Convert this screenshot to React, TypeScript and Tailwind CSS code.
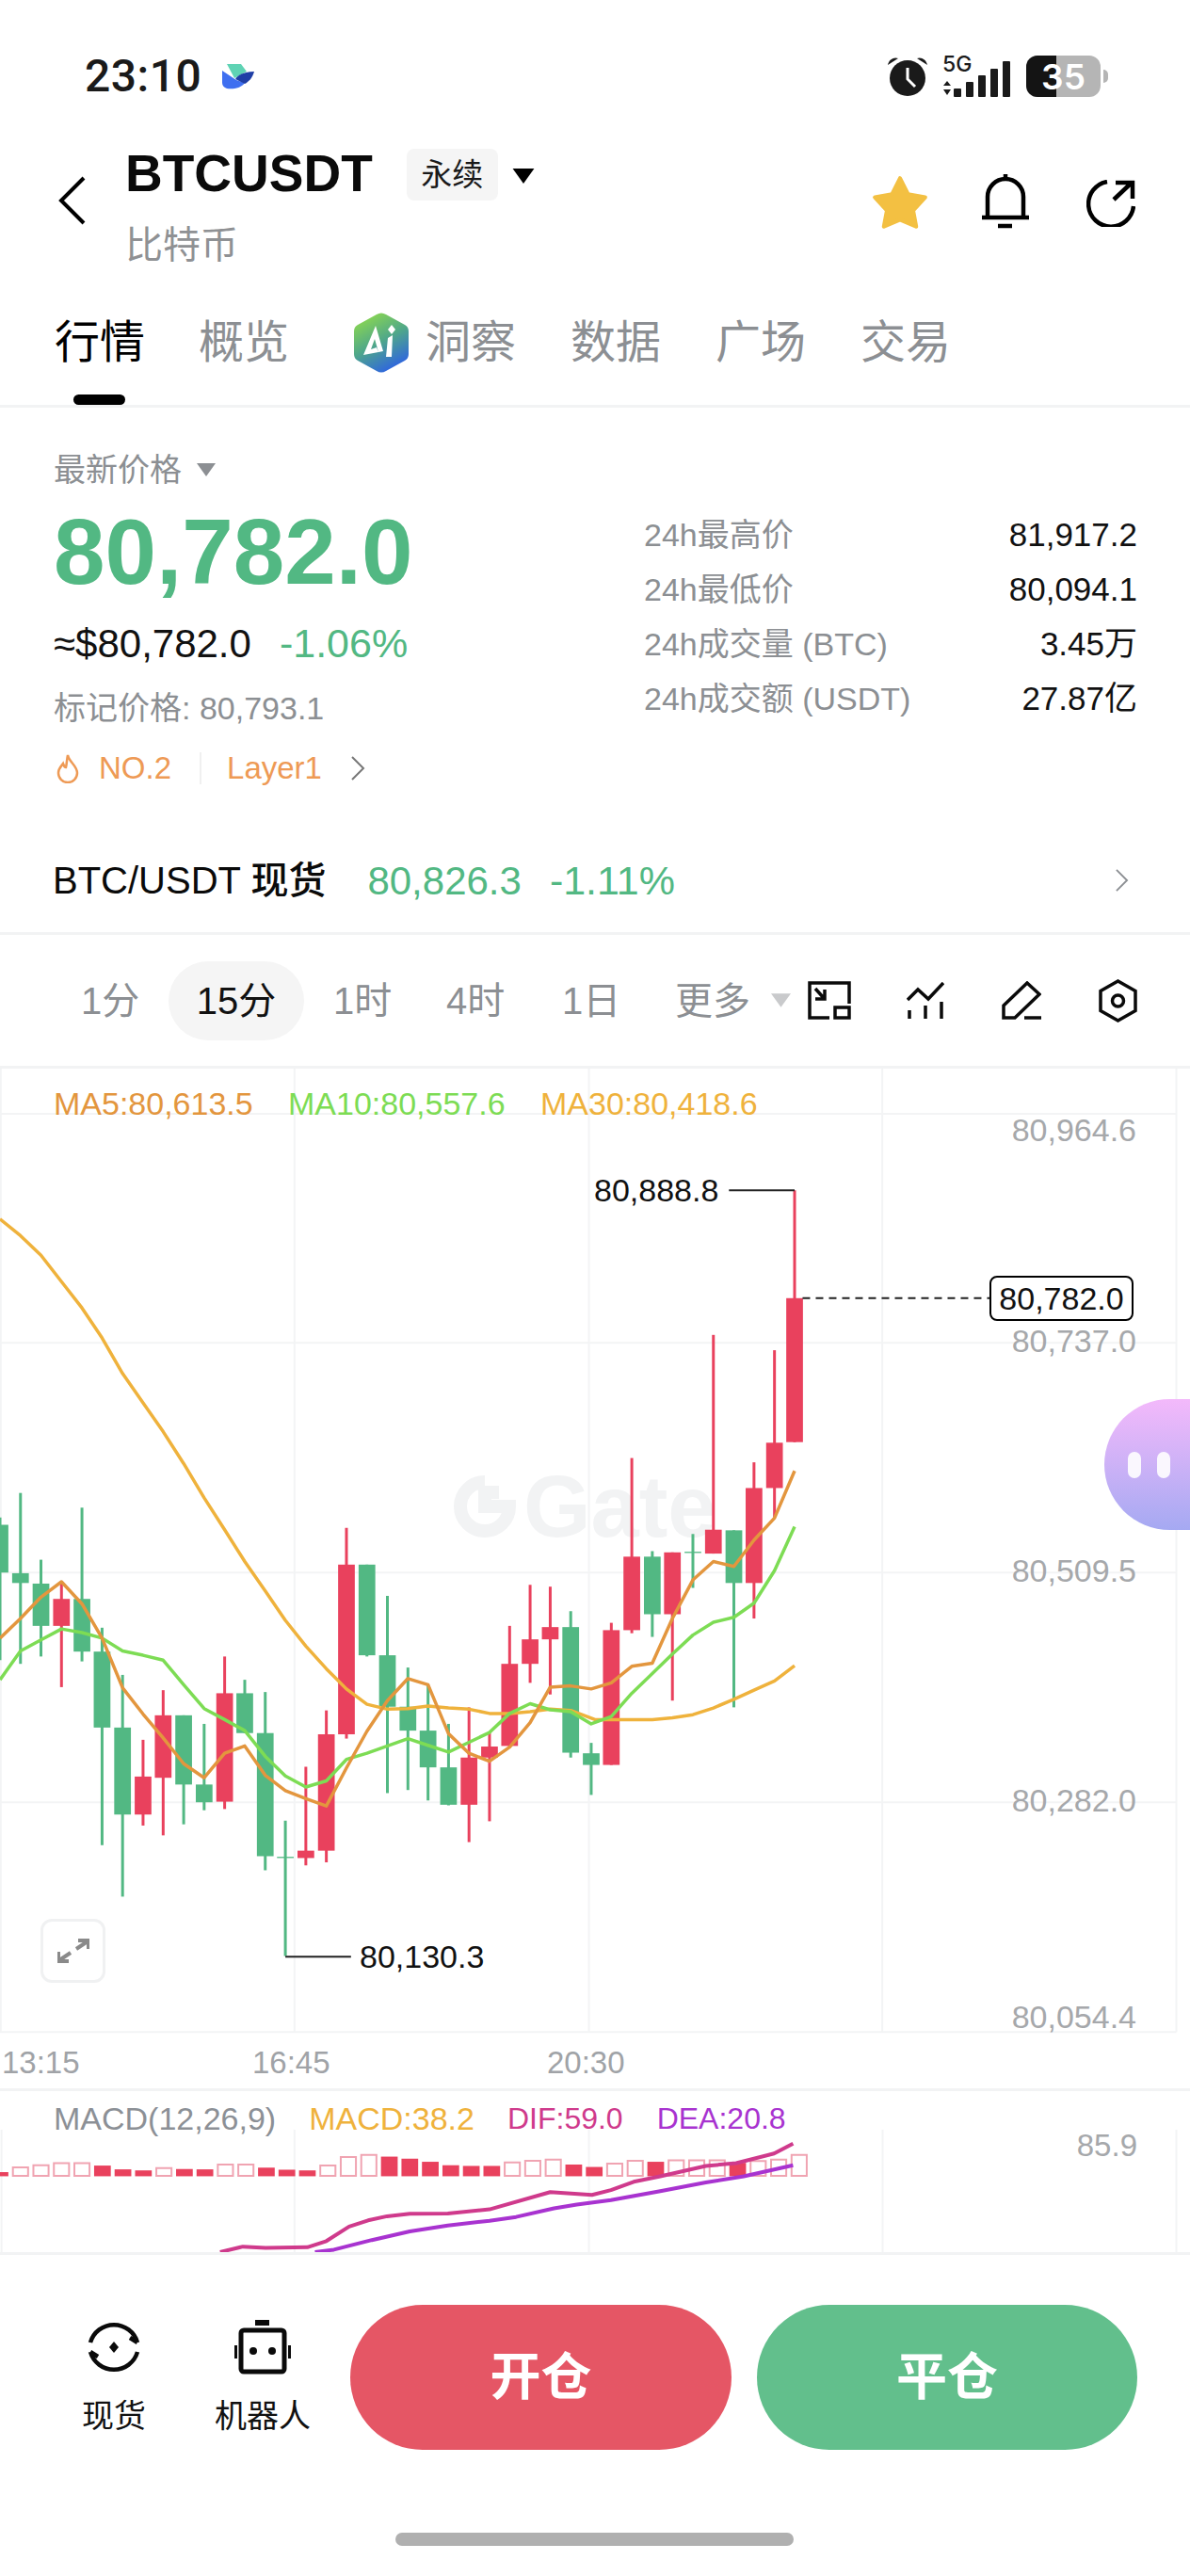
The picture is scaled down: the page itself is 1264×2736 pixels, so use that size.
import { ReactNode } from 'react';

const GREEN = '#52b883';
const RED = '#e9415d';

// x, wick top, body top, body bottom, wick bottom, up?
const candles: [number, number, number, number, number, boolean][] = [
  [0, 725, 737, 815, 958, false],
  [54, 685, 816, 832, 964, false],
  [108, 794, 833, 902, 952, false],
  [162, 830, 858, 902, 1002, true],
  [216, 709, 858, 944, 960, false],
  [269, 905, 944, 1068, 1260, false],
  [323, 982, 1068, 1210, 1344, false],
  [377, 1088, 1148, 1210, 1228, true],
  [430, 1007, 1048, 1150, 1244, true],
  [484, 1048, 1048, 1161, 1226, false],
  [538, 1062, 1161, 1190, 1203, false],
  [592, 952, 1012, 1189, 1201, true],
  [645, 990, 1012, 1077, 1077, false],
  [699, 1010, 1077, 1278, 1301, false],
  [752, 1220, 1279, 1281, 1441, false],
  [806, 1132, 1269, 1281, 1293, true],
  [860, 1040, 1079, 1269, 1288, true],
  [913, 742, 802, 1079, 1086, true],
  [967, 802, 802, 950, 952, false],
  [1021, 853, 950, 1034, 1175, false],
  [1075, 970, 1034, 1073, 1170, false],
  [1128, 998, 1073, 1133, 1187, false],
  [1182, 1062, 1133, 1194, 1195, false],
  [1236, 1035, 1117, 1194, 1255, true],
  [1290, 1076, 1099, 1117, 1221, true],
  [1343, 902, 964, 1098, 1099, true],
  [1397, 835, 924, 964, 995, true],
  [1450, 838, 904, 924, 1014, true],
  [1504, 878, 904, 1109, 1117, false],
  [1558, 1093, 1110, 1129, 1178, false],
  [1611, 897, 909, 1129, 1129, true],
  [1665, 628, 789, 909, 914, true],
  [1719, 780, 789, 883, 920, false],
  [1772, 782, 782, 883, 1024, true],
  [1826, 752, 781, 783, 840, false],
  [1880, 427, 745, 784, 784, true],
  [1934, 746, 746, 832, 1035, false],
  [1987, 635, 677, 832, 890, true],
  [2041, 452, 603, 677, 725, true],
  [2094, 191, 367, 602, 602, true],
];

const ma5 =
  '0,922 54,890 108,855 162,830 216,866 269,922 323,1003 377,1046 430,1085 484,1127 538,1150 592,1110 645,1098 699,1146 752,1171 806,1184 860,1196 913,1134 967,1074 1021,1024 1075,988 1128,998 1182,1078 1236,1110 1290,1123 1343,1100 1397,1060 1450,1002 1504,1000 1558,1005 1611,995 1665,968 1719,963 1772,890 1826,827 1880,797 1934,805 1987,762 2041,726 2094,649';
const ma10 =
  '0,990 54,943 108,925 162,907 216,913 269,922 323,943 377,950 430,958 484,998 538,1037 592,1055 645,1073 699,1115 752,1147 806,1165 860,1155 913,1120 967,1110 1021,1098 1075,1086 1128,1097 1182,1108 1236,1092 1290,1076 1343,1045 1397,1029 1450,1039 1504,1042 1558,1062 1611,1050 1665,1012 1719,980 1772,948 1826,917 1880,896 1934,888 1987,865 2041,812 2094,740';
const ma30 =
  '0,238 54,265 108,297 162,340 216,383 269,432 323,490 377,538 430,585 484,637 538,693 592,745 645,797 699,845 752,893 806,935 860,972 913,1005 967,1030 1021,1038 1075,1037 1128,1033 1182,1036 1236,1038 1290,1045 1343,1045 1397,1042 1450,1038 1504,1040 1568,1055 1665,1055 1719,1055 1772,1052 1826,1047 1880,1036 1934,1022 1987,1007 2041,992 2094,967';

// x, top, filled?
const macdBars: [number, number, boolean][] = [
  [0, 400, true], [27, 386, false], [54, 380, false], [81, 374, false], [108, 374, false],
  [135, 381, true], [162, 392, true], [189, 395, true], [216, 388, false], [243, 391, true],
  [270, 392, true], [297, 378, false], [324, 378, false], [351, 387, true], [378, 393, true],
  [405, 395, true], [432, 381, false], [459, 356, false], [486, 350, false], [513, 355, true],
  [540, 361, true], [567, 370, true], [594, 380, true], [621, 382, true], [648, 382, true],
  [675, 372, false], [702, 367, false], [729, 364, false], [756, 378, true], [783, 385, true],
  [810, 375, false], [837, 367, false], [864, 370, true], [891, 366, false], [918, 366, false],
  [945, 366, false], [972, 373, true], [999, 368, false], [1026, 364, false], [1053, 350, false],
];
const dif =
  '290,632 320,616 350,620 405,618 430,600 460,558 485,540 510,528 540,521 590,520 645,508 725,458 780,466 805,452 835,428 870,412 930,382 970,374 1020,346 1045,317';
const dea =
  '415,632 440,625 490,597 540,572 590,555 645,541 680,530 730,505 760,494 805,481 870,455 930,430 980,412 1045,380';

const Chevron = ({ className }: { className?: string }) => (
  <svg viewBox="0 0 16 28" fill="none" stroke="currentColor" strokeWidth="2" className={className}>
    <path d="M2 2 L14 14 L2 26" />
  </svg>
);

const Triangle = ({ className }: { className?: string }) => (
  <svg viewBox="0 0 20 14" fill="currentColor" className={className}>
    <path d="M0 0 H20 L10 14 Z" />
  </svg>
);

const StatRow = ({ label, value }: { label: string; value: string }) => (
  <div className="flex items-center justify-between h-[58px]">
    <span className="text-[34px] text-[#8c8f93]">{label}</span>
    <span className="text-[35px] text-[#111]">{value}</span>
  </div>
);

const Interval = ({ children, className }: { children: ReactNode; className?: string }) => (
  <span className={`text-[40px] whitespace-nowrap text-[#8c8f93] ${className ?? ''}`}>{children}</span>
);

const ChartLabel = ({ className, children }: { className: string; children: ReactNode }) => (
  <span className={`absolute -translate-y-1/2 leading-none whitespace-nowrap ${className}`}>{children}</span>
);

const StatusBar = () => (
  <div className="flex items-center h-[162px] pb-0">
    <span className="ml-[90px] text-[48px] font-medium font-['Roboto',sans-serif] text-[#1a1a1a] tracking-[0.5px]">23:10</span>
    <svg viewBox="0 0 34 28" className="ml-[22px] w-[34px] h-[28px]">
      <path d="M5 1 H20 L26 9 L13 16 Z" fill="#5fd3b4" />
      <path d="M0 8 L15 18 L24 21 C20 27 10 28 5 27 C2 26 0 24 0 21 Z" fill="#3f6ff0" />
      <path d="M14 17 C18 11 26 9 34 9 C32 16 28 20 24 22 Z" fill="#1f3fa6" />
    </svg>
    <div className="ml-auto flex items-center mr-[87px]">
      <svg viewBox="0 0 44 42" className="w-[44px] h-[42px]">
        <circle cx="22" cy="23" r="19" fill="#1a1a1a" />
        <path d="M22 12 V24 L30 32" stroke="#fff" strokeWidth="3" fill="none" />
        <path d="M1 9 C2 3 8 0 12 2 Z M43 9 C42 3 36 0 32 2 Z" fill="#1a1a1a" />
      </svg>
      <div className="relative ml-[15px] w-[72px] h-[43px]">
        <span className="absolute left-0 top-[-3px] text-[23px] leading-none font-medium font-['Inter',sans-serif] text-[#1a1a1a]">5G</span>
        <svg viewBox="0 0 72 43" className="absolute inset-0 w-[72px] h-[43px]" fill="#1a1a1a">
          <path d="M1 31 L5 26 L9 31 Z M1 35 L5 41 L9 35 Z" />
          <rect x="12" y="34" width="8" height="9" rx="1" />
          <rect x="25" y="27" width="8" height="16" rx="1" />
          <rect x="38" y="20" width="8" height="23" rx="1" />
          <rect x="51" y="13" width="8" height="30" rx="1" />
          <rect x="64" y="5" width="8" height="38" rx="1" />
        </svg>
      </div>
      <div className="relative ml-[17px] flex w-[79px] h-[44px] rounded-[12px] overflow-hidden bg-[#b5b5b5]">
        <div className="w-[32px] bg-[#141414]" />
        <span className="absolute inset-0 flex items-center justify-center text-[37px] leading-none font-semibold font-['Inter',sans-serif] text-white">35</span>
      </div>
      <div className="ml-[3px] w-[5px] h-[14px] rounded-r-full bg-[#b5b5b5]" />
    </div>
  </div>
);

const Header = () => (
  <div className="flex h-[124px] items-start">
    <svg viewBox="0 0 30 52" fill="none" stroke="#000" strokeWidth="4" className="ml-[62px] mt-[25px] w-[30px] h-[52px]">
      <path d="M27 2 L3 26 L27 50" />
    </svg>
    <div className="ml-[41px] flex flex-col">
      <div className="flex items-center h-[56px] mt-[-6px]">
        <span className="text-[55px] font-bold leading-none text-[#0a0a0a]">BTCUSDT</span>
        <span className="ml-[36px] mt-[3px] flex items-center justify-center w-[97px] h-[55px] rounded-lg bg-[#f5f5f5] text-[33px] text-[#1a1a1a]">永续</span>
        <Triangle className="ml-[15px] mt-[6px] w-[24px] h-[16px] text-black" />
      </div>
      <span className="mt-[26px] text-[40px] leading-[44px] text-[#8f9194]">比特币</span>
    </div>
    <div className="ml-auto flex items-start mr-[58px] mt-[23px]">
      <svg viewBox="0 0 58 56" className="w-[62px] h-[60px]">
        <path d="M29 4 L37 20 L54 23 L42 36 L45 52 L29 45 L13 52 L16 36 L4 23 L21 20 Z" fill="#f3c042" stroke="#f3c042" strokeWidth="4" strokeLinejoin="round" />
      </svg>
      <svg viewBox="0 0 50 58" fill="none" stroke="#000" strokeWidth="4.5" className="ml-[56px] w-[50px] h-[58px]">
        <path d="M6 46 V24 a19 19 0 0 1 38 0 V46" />
        <path d="M0 46 H50 M25 0 V6 M17 55 H32" />
      </svg>
      <svg viewBox="0 0 52 50" fill="none" stroke="#000" strokeWidth="4.5" className="ml-[61px] mt-[6px] w-[52px] h-[50px]">
        <path d="M22 2 A24 24 0 1 0 50 28" />
        <path d="M29 21 L48 3 M31 3 H49 V20" />
      </svg>
    </div>
  </div>
);

const AiIcon = () => (
  <svg viewBox="0 0 60 64" className="w-[60px] h-[64px]">
    <defs>
      <linearGradient id="ai" x1="0.2" y1="0" x2="0.7" y2="1">
        <stop offset="0" stopColor="#8fdb4c" />
        <stop offset="0.5" stopColor="#4fa78a" />
        <stop offset="1" stopColor="#2c60e6" />
      </linearGradient>
    </defs>
    <path d="M25 2 Q30 -1 35 2 L55 13 Q59 15 59 20 L59 44 Q59 49 55 51 L35 62 Q30 65 25 62 L5 51 Q1 49 1 44 L1 20 Q1 15 5 13 Z" fill="url(#ai)" />
    <path d="M11 45 L24 14 L32 41 L27 42 L23 28 L19 39 L25 37 L27 42 Z" fill="#fff" />
    <path d="M37 27 L42 24 L41 47 L35 47 Z M41 13 L45 18 L41 23 L37 18 Z" fill="#fff" />
  </svg>
);

const Tabs = () => (
  <div className="relative h-[147px] flex items-start border-b-[3px] border-[#f2f3f4]">
    <div className="flex items-center h-[64px] ml-[58px] mt-[46px] text-[48px] text-[#8c8f93]">
      <span className="text-black w-[96px]">行情</span>
      <span className="ml-[57px] w-[96px]">概览</span>
      <span className="ml-[68px]"><AiIcon /></span>
      <span className="ml-[17px] w-[96px]">洞察</span>
      <span className="ml-[58px] w-[96px]">数据</span>
      <span className="ml-[58px] w-[96px]">广场</span>
      <span className="ml-[58px] w-[96px]">交易</span>
    </div>
    <div className="absolute left-[78px] bottom-0 w-[55px] h-[11px] rounded-full bg-black" />
  </div>
);

const PriceBlock = () => (
  <div className="flex h-[560px] border-b-[3px] border-[#f2f3f4] flex-col">
    <div className="flex h-[452px]">
      <div className="ml-[57px] w-[520px] flex flex-col">
        <div className="flex items-center mt-[46px] h-[40px]">
          <span className="text-[34px] text-[#8c8f93]">最新价格</span>
          <Triangle className="ml-[16px] w-[20px] h-[14px] text-[#8c8f93]" />
        </div>
        <span className="mt-[17px] text-[98px] leading-[100px] font-bold" style={{ color: GREEN }}>80,782.0</span>
        <div className="flex items-center mt-[23px] h-[48px]">
          <span className="text-[42px] text-[#111]">≈$80,782.0</span>
          <span className="ml-[30px] text-[43px]" style={{ color: GREEN }}>-1.06%</span>
        </div>
        <span className="mt-[25px] text-[34px] leading-[40px] text-[#8c8f93]">标记价格: 80,793.1</span>
        <div className="flex items-center mt-[24px] h-[40px]">
          <svg viewBox="0 0 24 32" fill="none" stroke="#ee9a55" strokeWidth="2.5" className="ml-[3px] w-[24px] h-[32px]">
            <path d="M12 2 C13 9 22 13 22 21 a10 10 0 0 1 -20 0 C2 16 5 14 7 11 C8 14 9 15 10 15 C11 11 11 6 12 2 Z" />
          </svg>
          <span className="ml-[21px] text-[33px] text-[#ee9a55]">NO.2</span>
          <div className="ml-[30px] w-[2px] h-[34px] bg-[#f0f0f0]" />
          <span className="ml-[27px] text-[33px] text-[#ee9a55]">Layer1</span>
          <Chevron className="ml-[30px] w-[16px] h-[28px] text-[#777]" />
        </div>
      </div>
      <div className="ml-[107px] w-[524px] mt-[106px] flex flex-col">
        <StatRow label="24h最高价" value="81,917.2" />
        <StatRow label="24h最低价" value="80,094.1" />
        <StatRow label="24h成交量 (BTC)" value="3.45万" />
        <StatRow label="24h成交额 (USDT)" value="27.87亿" />
      </div>
    </div>
    <div className="flex items-center h-[52px] mt-[24px] ml-[56px] mr-[65px]">
      <span className="text-[40px] font-medium text-[#0a0a0a]">BTC/USDT 现货</span>
      <span className="ml-[44px] text-[42px]" style={{ color: GREEN }}>80,826.3</span>
      <span className="ml-[30px] text-[43px]" style={{ color: GREEN }}>-1.11%</span>
      <Chevron className="ml-auto w-[15px] h-[26px] text-[#8c8f93]" />
    </div>
  </div>
);

const IntervalBar = () => (
  <div className="flex items-center h-[142px] border-b-[3px] border-[#f2f3f4]">
    <Interval className="ml-[86px] w-[64px]">1分</Interval>
    <span className="ml-[29px] flex items-center justify-center w-[144px] h-[84px] rounded-[42px] bg-[#f5f5f5] text-[40px] text-[#111]">15分</span>
    <Interval className="ml-[31px] w-[62px]">1时</Interval>
    <Interval className="ml-[58px] w-[64px]">4时</Interval>
    <Interval className="ml-[59px] w-[62px]">1日</Interval>
    <Interval className="ml-[58px] w-[84px]">更多</Interval>
    <Triangle className="ml-[18px] w-[21px] h-[15px] text-[#c9cacc]" />
    <svg viewBox="0 0 46 41" fill="none" stroke="#0a0a0a" strokeWidth="3.5" className="ml-[18px] w-[46px] h-[41px]">
      <path d="M23 39 H2 V2 H44 V24" />
      <rect x="29" y="28" width="15" height="11" />
      <path d="M8 8 L17 18 M18 9 V19 H8" />
    </svg>
    <svg viewBox="0 0 40 40" fill="none" stroke="#0a0a0a" strokeWidth="3.5" className="ml-[59px] w-[40px] h-[40px]">
      <path d="M1 19 L12 8 L23 18 L39 1" />
      <path d="M3 30 V39 M20 25 V39 M37 21 V39" />
    </svg>
    <svg viewBox="0 0 42 41" fill="none" stroke="#0a0a0a" strokeWidth="3.5" className="ml-[61px] w-[42px] h-[41px]">
      <path d="M27 2 L40 14 L14 39 H2 V26 Z" />
      <path d="M24 39 H42" />
    </svg>
    <svg viewBox="0 0 41 46" fill="none" stroke="#0a0a0a" strokeWidth="3.5" className="ml-[61px] w-[41px] h-[46px]">
      <path d="M20.5 2 L39 12.5 V33.5 L20.5 44 L2 33.5 V12.5 Z" />
      <circle cx="20.5" cy="23" r="6" />
    </svg>
  </div>
);

const KlineChart = () => (
  <div className="relative h-[1083px] border-b-[3px] border-[#f2f3f4] box-content">
    <div className="absolute left-[482px] top-[419px] flex items-center gap-[8px] text-[#f2f3f4]">
      <svg viewBox="0 0 66 66" className="w-[66px] h-[66px]">
        <path d="M33 7 A26 26 0 1 0 59 33 H33 V18 H48" fill="none" stroke="currentColor" strokeWidth="14" />
      </svg>
      <span className="text-[92px] font-bold leading-none">Gate</span>
    </div>

    <svg viewBox="0 -7.7 3136 1664.6" preserveAspectRatio="none" className="absolute inset-0 w-[1264px] h-[1083px]">
      {[66, 440, 815, 1190, 1565].map((y) => (
        <line key={y} x1="0" x2="3100" y1={y} y2={y} stroke="#f3f4f5" strokeWidth="2" vectorEffect="non-scaling-stroke" />
      ))}
      {[2, 776, 1552, 2325, 3100].map((x) => (
        <line key={x} x1={x} x2={x} y1="-8" y2="1565" stroke="#f3f4f5" strokeWidth="2" vectorEffect="non-scaling-stroke" />
      ))}
      {candles.map(([x, wickTop, top, bottom, wickBottom, up]) => (
        <g key={x} fill={up ? RED : GREEN} stroke={up ? RED : GREEN}>
          <line x1={x} x2={x} y1={wickTop} y2={wickBottom} strokeWidth="3" vectorEffect="non-scaling-stroke" />
          <rect x={x - 22} y={top} width="44" height={bottom - top} stroke="none" />
        </g>
      ))}
      <polyline points={ma30} fill="none" stroke="#efb23c" strokeWidth="3.5" strokeLinejoin="round" vectorEffect="non-scaling-stroke" />
      <polyline points={ma10} fill="none" stroke="#7ddc54" strokeWidth="3.5" strokeLinejoin="round" vectorEffect="non-scaling-stroke" />
      <polyline points={ma5} fill="none" stroke="#e3963e" strokeWidth="3.5" strokeLinejoin="round" vectorEffect="non-scaling-stroke" />
      <path d="M752 1442 H925 M1921 191 H2094" fill="none" stroke="#222" strokeWidth="2" vectorEffect="non-scaling-stroke" />
      <line x1="2115" x2="2608" y1="367" y2="367" stroke="#222" strokeWidth="2" strokeDasharray="8 6" vectorEffect="non-scaling-stroke" />
    </svg>

    <ChartLabel className="left-[57px] top-[37px] text-[34px] text-[#e3963e]">MA5:80,613.5</ChartLabel>
    <ChartLabel className="left-[306px] top-[37px] text-[34px] text-[#7ddc54]">MA10:80,557.6</ChartLabel>
    <ChartLabel className="left-[574px] top-[37px] text-[34px] text-[#efb23c]">MA30:80,418.6</ChartLabel>

    <ChartLabel className="right-[57px] top-[65px] text-[34px] text-[#a6a8ab]">80,964.6</ChartLabel>
    <ChartLabel className="right-[57px] top-[289px] text-[34px] text-[#a6a8ab]">80,737.0</ChartLabel>
    <ChartLabel className="right-[57px] top-[533px] text-[34px] text-[#a6a8ab]">80,509.5</ChartLabel>
    <ChartLabel className="right-[57px] top-[777px] text-[34px] text-[#a6a8ab]">80,282.0</ChartLabel>
    <ChartLabel className="right-[57px] top-[1007px] text-[34px] text-[#a6a8ab]">80,054.4</ChartLabel>

    <ChartLabel className="left-[631px] top-[129px] text-[34px] text-[#111]">80,888.8</ChartLabel>
    <ChartLabel className="left-[382px] top-[943px] text-[34px] text-[#111]">80,130.3</ChartLabel>
    <span className="absolute left-[1051px] top-[220px] flex items-center justify-center w-[153px] h-[48px] rounded-lg border-2 border-black bg-white text-[34px] text-[#111]">80,782.0</span>

    <ChartLabel className="left-[2px] top-[1055px] text-[33px] text-[#a0a3a7]">13:15</ChartLabel>
    <ChartLabel className="left-[268px] top-[1055px] text-[33px] text-[#a0a3a7]">16:45</ChartLabel>
    <ChartLabel className="left-[581px] top-[1055px] text-[33px] text-[#a0a3a7]">20:30</ChartLabel>

    <div className="absolute left-[43px] top-[903px] flex items-center justify-center w-[69px] h-[68px] rounded-xl border-[3px] border-[#f0f1f2] bg-white">
      <svg viewBox="0 0 34 26" fill="none" stroke="#8a8a8a" strokeWidth="4" className="w-[34px] h-[26px]">
        <path d="M20 11 L32 3 M22 2 H33 V11 M14 15 L2 23 M1 14 V24 H12" />
      </svg>
    </div>

    <div className="absolute right-0 top-[351px] w-[91px] h-[139px] rounded-l-[70px] bg-gradient-to-b from-[#f3b9fb] to-[#a5a9f2] flex items-center">
      <div className="ml-[25px] w-[14px] h-[28px] rounded-full bg-white/90" />
      <div className="ml-[17px] w-[14px] h-[28px] rounded-full bg-white/90" />
    </div>
  </div>
);

const MacdPanel = () => (
  <div className="border-b-[3px] border-[#f2f3f4]">
    <div className="h-[41px] pt-[12px] flex text-[34px] leading-[34px] whitespace-nowrap">
      <span className="ml-[57px] text-[#8c9096]">MACD(12,26,9)</span>
      <span className="ml-[35px] text-[#efb23c]">MACD:38.2</span>
      <span className="ml-[35px] text-[32px] text-[#cf3a8c]">DIF:59.0</span>
      <span className="ml-[36px] text-[32px] text-[#a833d0]">DEA:20.8</span>
    </div>
    <div className="relative h-[130px]">
      <svg viewBox="0 277 1568 355" preserveAspectRatio="none" className="block w-[1264px] h-[130px]">
        {[2, 388, 776, 1163, 1550].map((x) => (
          <line key={x} x1={x} x2={x} y1="277" y2="632" stroke="#f3f4f5" strokeWidth="2" vectorEffect="non-scaling-stroke" />
        ))}
        {macdBars.map(([x, top, filled]) =>
          filled ? (
            <rect key={x} x={x - 11} y={top} width="22" height={412 - top} fill={RED} />
          ) : (
            <rect key={x} x={x - 10} y={top} width="20" height={411 - top} fill="#fff" stroke="#f0a4b2" strokeWidth="2" vectorEffect="non-scaling-stroke" />
          )
        )}
        <polyline points={dif} fill="none" stroke="#cf3a8c" strokeWidth="4" strokeLinejoin="round" vectorEffect="non-scaling-stroke" />
        <polyline points={dea} fill="none" stroke="#a833d0" strokeWidth="4" strokeLinejoin="round" vectorEffect="non-scaling-stroke" />
      </svg>
      <span className="absolute right-[56px] top-[0px] text-[33px] leading-[34px] text-[#a6a8ab]">85.9</span>
    </div>
  </div>
);

const BottomBar = () => (
  <div className="flex pt-[53px] pl-[51px]">
    <div className="flex flex-col items-center w-[140px]">
      <svg viewBox="0 0 58 58" fill="none" stroke="#0a0a0a" strokeWidth="4.5" className="mt-[16px] w-[58px] h-[58px]">
        <path d="M4 24 A26 26 0 0 1 54 24 M54 24 L46 19" />
        <path d="M54 34 A26 26 0 0 1 4 34 M4 34 L12 39" />
        <path d="M29 23 L34 29 L29 35 L24 29 Z" fill="#0a0a0a" stroke="none" />
      </svg>
      <span className="mt-[27px] text-[34px] leading-[34px] text-[#111]">现货</span>
    </div>
    <div className="flex flex-col items-center w-[140px] ml-[18px]">
      <svg viewBox="0 0 60 58" fill="none" className="mt-[16px] w-[60px] h-[58px]">
        <rect x="22" y="0" width="15" height="6" fill="#0a0a0a" />
        <rect x="7" y="11" width="46" height="44" rx="3" stroke="#0a0a0a" strokeWidth="5" />
        <rect x="0" y="27" width="3" height="14" fill="#0a0a0a" />
        <rect x="57" y="27" width="3" height="14" fill="#0a0a0a" />
        <circle cx="20" cy="33" r="4" fill="#0a0a0a" />
        <circle cx="40" cy="33" r="4" fill="#0a0a0a" />
      </svg>
      <span className="mt-[27px] text-[34px] leading-[34px] text-[#111]">机器人</span>
    </div>
    <button className="ml-[23px] w-[405px] h-[154px] rounded-[77px] bg-[#e55665] text-[54px] font-bold text-white">开仓</button>
    <button className="ml-[27px] w-[404px] h-[154px] rounded-[77px] bg-[#62bf8c] text-[54px] font-bold text-white">平仓</button>
  </div>
);

export default function App() {
  return (
    <div className="relative w-[1264px] h-[2736px] overflow-hidden bg-white font-['Liberation_Sans','Noto_Sans_CJK_SC',sans-serif]">
      <StatusBar />
      <Header />
      <Tabs />
      <PriceBlock />
      <IntervalBar />
      <KlineChart />
      <MacdPanel />
      <BottomBar />
      <div className="ml-[420px] mt-[88px] w-[423px] h-[14px] rounded-full bg-[#b0b0b0]" />
    </div>
  );
}
